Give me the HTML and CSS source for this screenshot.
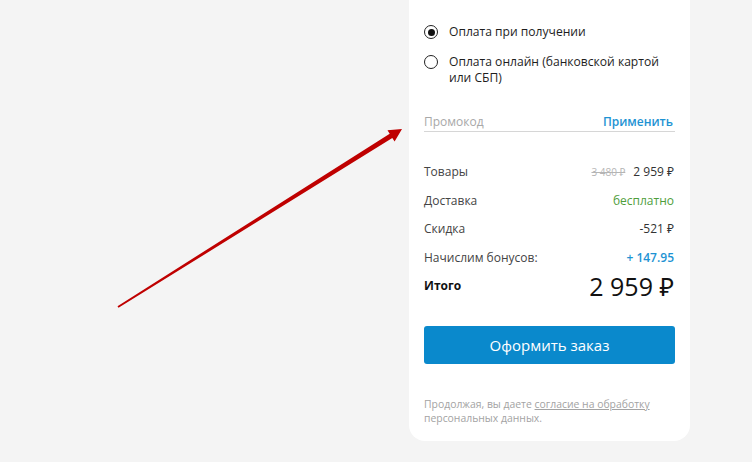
FILE: index.html
```html
<!DOCTYPE html>
<html lang="ru">
<head>
<meta charset="utf-8">
<link rel="stylesheet" href="styles.css">
</head>
<body>
<div class="page">
  <div class="card">
    <div class="payment">
      <label class="radio-row">
        <span class="radio checked"></span>
        <span class="radio-text">Оплата при получении</span>
      </label>
      <label class="radio-row">
        <span class="radio"></span>
        <span class="radio-text">Оплата онлайн (банковской картой<br>или СБП)</span>
      </label>
    </div>
    <div class="promo">
      <span class="promo-placeholder">Промокод</span>
      <span class="promo-apply">Применить</span>
    </div>
    <div class="summary">
      <div class="row"><span class="label">Товары</span><span class="value"><s class="old">3 480 ₽</s>2 959 ₽</span></div>
      <div class="row"><span class="label">Доставка</span><span class="value green">бесплатно</span></div>
      <div class="row"><span class="label">Скидка</span><span class="value">-521 ₽</span></div>
      <div class="row"><span class="label">Начислим бонусов:</span><span class="value blue">+ 147.95</span></div>
      <div class="row total"><span class="label">Итого</span><span class="value">2 959 ₽</span></div>
    </div>
    <button class="order-btn">Оформить заказ</button>
    <p class="consent">Продолжая, вы даете <a class="consent-link">согласие на обработку</a> персональных данных.</p>
  </div>
  <svg class="arrow" width="752" height="462" viewBox="0 0 752 462">
    <polygon fill="#bf0000" points="117.5,306.2 389.7,133.8 387.5,130.2 402,129 394.6,141.6 392.3,138.0 118.5,307.8"/>
  </svg>
</div>
</body>
</html>
```
FILE: styles.css
```css
* { box-sizing: border-box; }
html, body { margin: 0; padding: 0; }
body {
  background: #f4f4f4;
  font-family: "Open Sans", "Noto Sans", sans-serif;
  color: #222;
  width: 752px;
  height: 462px;
  overflow: hidden;
}
.page {
  position: relative;
  width: 752px;
  height: 462px;
  padding-left: 409px;
}
.card {
  width: 281px;
  background: #fff;
  border-radius: 0 0 16px 16px;
  padding: 24px 15px 16px;
  display: flex;
  flex-direction: column;
}
.payment {
  display: flex;
  flex-direction: column;
  gap: 14px;
}
.radio-row {
  display: flex;
  align-items: flex-start;
  gap: 11px;
  font-size: 12.1px;
  line-height: 16px;
  color: #1e1e1e;
}
.radio-text { font-weight: 500; }
.radio {
  flex: none;
  width: 14px;
  height: 14px;
  margin-top: 1px;
  border: 1.5px solid #222;
  border-radius: 50%;
  display: flex;
  align-items: center;
  justify-content: center;
}
.radio.checked::after {
  content: "";
  width: 7px;
  height: 7px;
  border-radius: 50%;
  background: #111;
}
.promo {
  margin-top: 26px;
  display: flex;
  justify-content: space-between;
  align-items: center;
  border-bottom: 1px solid #d6d6d6;
  height: 20px;
  font-size: 12px;
  padding-right: 2px;
}
.promo-placeholder { color: #a8a8a8; }
.promo-apply { color: #1e93d3; font-weight: 600; }
.summary {
  margin-top: 32px;
  display: flex;
  flex-direction: column;
  gap: 12.5px;
}
.row {
  display: flex;
  justify-content: space-between;
  align-items: center;
  font-size: 12px;
  line-height: 16px;
  color: #444;
  padding-right: 1px;
}
.value { color: #333; }
.old { color: #b5b5b5; font-size: 10px; margin-right: 8px; text-decoration: line-through; }
.green { color: #4f9e3c; }
.blue { color: #1e93d3; font-weight: 600; }
.row.total { height: 16px; }
.row.total .label { font-weight: 700; color: #111; }
.row.total .value { font-size: 25px; color: #111; line-height: 16px; }
.order-btn {
  margin-top: 32px;
  height: 38px;
  border: none;
  border-radius: 3px;
  background: #0a89cc;
  color: #fff;
  font-family: inherit;
  font-size: 15px;
  width: 100%;
}
.consent {
  margin: 33px 0 0;
  font-size: 10.4px;
  line-height: 14px;
  color: #a3a3a3;
}
.consent-link { color: #a3a3a3; text-decoration: underline; }
.arrow {
  position: absolute;
  left: 0;
  top: 0;
  pointer-events: none;
}
```
